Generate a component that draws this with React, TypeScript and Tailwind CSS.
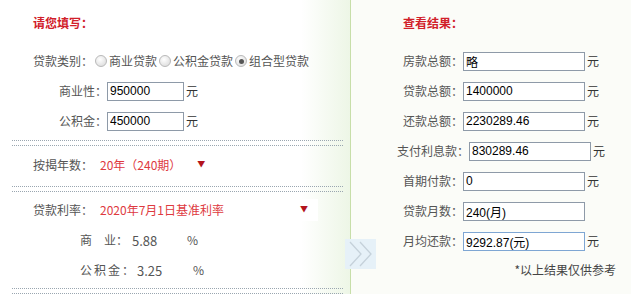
import type { ReactNode } from 'react';

const FONT = '"Noto Sans CJK SC", "Noto Sans", sans-serif';
const NUM_FONT = '"Liberation Sans", Arial, "Noto Sans CJK SC", sans-serif';

function Radio({ checked = false }: { checked?: boolean }) {
  return (
    <span className="relative inline-flex w-[12px] h-[12px] mx-[2px] rounded-full border border-[#b9b9b9] bg-[radial-gradient(circle_at_40%_35%,#ffffff,#d6d6d6)] items-center justify-center">
      {checked && <span className="w-[5px] h-[5px] rounded-full bg-[#555]" />}
    </span>
  );
}

function Dots() {
  return <div className="ml-[12px] w-[331px] h-[6px] border-y border-dotted border-[#9aa6b0]" />;
}

function Field({ value, width = 'w-[77px]', focus = false }: { value: string; width?: string; focus?: boolean }) {
  return (
    <input
      readOnly
      value={value}
      className={`${width} h-[19px] px-[2px] bg-white border text-[12px] text-black outline-none ${
        focus ? 'border-[#7ea6d3]' : 'border-[#8e9aa8]'
      }`}
      style={{ fontFamily: NUM_FONT }}
    />
  );
}

function ResultRow({ label, value, unit = true, focus = false }: { label: string; value: string; unit?: boolean; focus?: boolean }) {
  return (
    <div className="h-[30px] flex items-center justify-center">
      <span>{label}：</span>
      <Field value={value} width="w-[122px]" focus={focus} />
      <span className={`ml-[2px] text-[#333] ${unit ? '' : 'invisible'}`}>元</span>
    </div>
  );
}

function Row({ className = '', children }: { className?: string; children: ReactNode }) {
  return <div className={`flex items-center ${className}`}>{children}</div>;
}

export default function App() {
  return (
    <div
      className="w-[631px] h-[294px] flex overflow-hidden text-[12px] leading-none text-[#555]"
      style={{ fontFamily: FONT }}
    >
      {/* 左侧：填写 */}
      <div className="w-[351px] shrink-0 border-r border-[#c7dea9] bg-[linear-gradient(to_right,#ffffff_86%,#edf6e6)]">
        <Row className="h-[46px] pl-[33px]">
          <span className="font-bold text-[#d1202a]">请您填写：</span>
        </Row>
        <Row className="h-[30px] pl-[33px]">
          <span>贷款类别：</span>
          <Radio />
          <span>商业贷款</span>
          <Radio />
          <span>公积金贷款</span>
          <Radio checked />
          <span>组合型贷款</span>
        </Row>
        <Row className="h-[30px] pl-[59px]">
          <span>商业性：</span>
          <Field value="950000" />
          <span className="ml-[2px] text-[#333]">元</span>
        </Row>
        <Row className="h-[30px] pl-[59px]">
          <span>公积金：</span>
          <Field value="450000" />
          <span className="ml-[2px] text-[#333]">元</span>
        </Row>
        <div className="h-[4px]" />
        <Dots />
        <Row className="h-[38px] pl-[33px]">
          <span>按揭年数：</span>
          <span className="ml-[7px] text-[#de3a3f]">20年（240期）</span>
          <span className="ml-[16px] text-[8px] text-[#b3141c] -mt-[3px]">▼</span>
        </Row>
        <div className="h-[2px]" />
        <Dots />
        <Row className="h-[36px] pl-[33px]">
          <span>贷款利率：</span>
          <div className="ml-[4px] w-[221px] h-[22px] bg-white flex items-center pl-[3px]">
            <span className="text-[#de3a3f]">2020年7月1日基准利率</span>
            <span className="ml-auto mr-[10px] text-[8px] text-[#b3141c] -mt-[3px]">▼</span>
          </div>
        </Row>
        <Row className="h-[24px] pl-[80px]">
          <span>商　业：</span>
          <span className="w-[54px] h-[20px] bg-white flex items-center pl-[4px] text-[13px] text-[#555]">5.88</span>
          <span className="ml-[5px]">%</span>
        </Row>
        <Row className="h-[36px] pl-[80px]">
          <span className="tracking-[2px]">公积金</span>
          <span>：</span>
          <span className="w-[51px] h-[20px] bg-white flex items-center pl-[3px] text-[13px] text-[#555]">3.25</span>
          <span className="ml-[8px]">%</span>
        </Row>
        <Dots />
      </div>

      {/* 右侧：结果 */}
      <div className="relative flex-1 bg-[#fbfcf8] pl-[20px]">
        <div className="absolute left-[-6px] top-[239px] w-[31px] h-[30px] bg-[#e6f1f8] flex items-center justify-center">
          <svg width="28" height="28" viewBox="0 0 28 28" fill="none" stroke="#c5d1da" strokeWidth="1.3">
            <polyline points="3,2 14,14 3,26" />
            <polyline points="13,2 24,14 13,26" />
          </svg>
        </div>
        <Row className="h-[46px] pl-[32px]">
          <span className="font-bold text-[#d1202a]">查看结果：</span>
        </Row>
        <ResultRow label="房款总额" value="略" />
        <ResultRow label="贷款总额" value="1400000" />
        <ResultRow label="还款总额" value="2230289.46" />
        <ResultRow label="支付利息款" value="830289.46" />
        <ResultRow label="首期付款" value="0" />
        <ResultRow label="贷款月数" value="240(月)" unit={false} />
        <ResultRow label="月均还款" value="9292.87(元)" focus />
        <div className="h-[28px] flex items-center justify-end pr-[15px] text-[#444]">*以上结果仅供参考</div>
      </div>
    </div>
  );
}
